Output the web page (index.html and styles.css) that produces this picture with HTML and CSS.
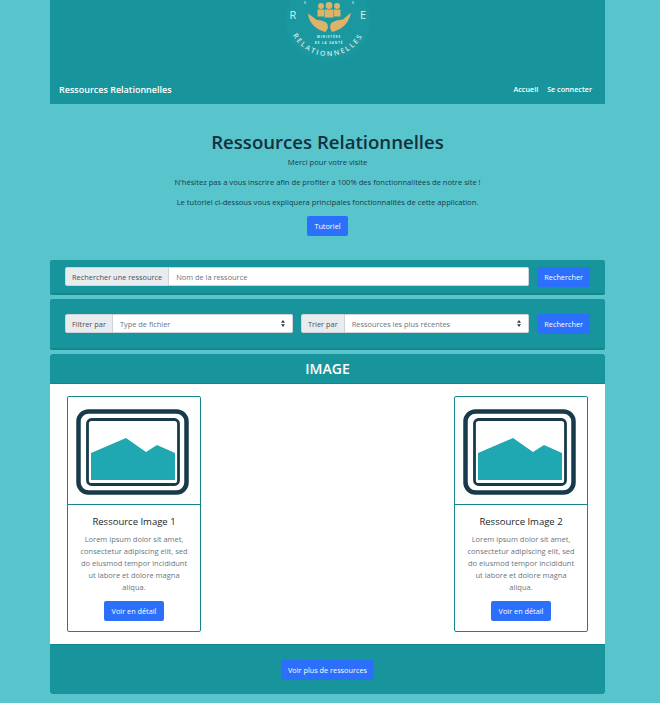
FILE: index.html
```html
<!DOCTYPE html>
<html lang="fr">
<head>
  <meta charset="UTF-8">
  <meta name="viewport" content="width=device-width, initial-scale=1.0">
  <title>Ressources Relationnelles</title>
  <link rel="stylesheet" href="styles.css">
</head>
<body>
  <div class="page">

    <!-- Header -->
    <header class="header">
      <svg class="logo" viewBox="0 0 86 66" width="86" height="66">
        <defs>
          <path id="logoArc" d="M5.500 30 A40 40 0 0 0 80.500 30"/>
        </defs>
        <circle cx="43" cy="20" r="42" fill="#1b989f"/>
        <text class="logo-letter" x="4.500" y="19">R</text>
        <text class="logo-letter" x="75" y="19">E</text>
        <text class="logo-top" x="19" y="3.500">S</text>
        <text class="logo-top" x="67" y="3.500">S</text>
        <g fill="#dcb368">
          <circle cx="36" cy="6" r="3"/>
          <circle cx="44" cy="5.500" r="3.400"/>
          <circle cx="52" cy="6" r="3"/>
          <path d="M32.500 9.500h6.500v7h-6.500zM39.500 9.500h9v8h-9zM49 9.500h6.500v7h-6.500z"/>
          <path d="M23 13.500 L32 20 C36 20 40 21 42.500 24 L43 28 L40.500 32 C32 30 24 24 23 13.500Z"/>
          <path d="M66 12.500 L58 19.500 C53 20 48 21 45.500 24 L45 28 L47 32 C56 30 64 24 66 12.500Z"/>
        </g>
        <text class="logo-small" x="44" y="37.500">MINISTÈRE</text>
        <text class="logo-small" x="44" y="44">DE LA SANTÉ</text>
        <text class="logo-ring"><textPath href="#logoArc" startOffset="50%">RELATIONNELLES</textPath></text>
      </svg>
      <nav class="navbar">
        <a class="brand" href="#">Ressources Relationnelles</a>
        <div class="nav-links">
          <a href="#">Accueil</a>
          <a href="#">Se connecter</a>
        </div>
      </nav>
    </header>

    <!-- Intro -->
    <section class="hero">
      <h1>Ressources Relationnelles</h1>
      <p class="hero-first">Merci pour votre visite</p>
      <p>N'hésitez pas a vous inscrire afin de profiter a 100% des fonctionnalitées de notre site !</p>
      <p class="hero-last">Le tutoriel ci-dessous vous expliquera principales fonctionnalités de cette application.</p>
      <button class="btn">Tutoriel</button>
    </section>

    <!-- Search -->
    <form class="bar bar-search">
      <div class="input-group grow">
        <span class="addon">Rechercher une ressource</span>
        <input class="field" type="text" placeholder="Nom de la ressource">
      </div>
      <button class="btn" type="button">Rechercher</button>
    </form>

    <!-- Filters -->
    <form class="bar bar-filter">
      <div class="input-group filter-type">
        <span class="addon">Filtrer par</span>
        <div class="field select">
          Type de fichier
          <svg class="chevrons" viewBox="0 0 4 7" width="4" height="7"><path d="M2 0 L4 2.700 H0Z M2 7 L4 4.300 H0Z"/></svg>
        </div>
      </div>
      <div class="input-group grow">
        <span class="addon">Trier par</span>
        <div class="field select">
          Ressources les plus récentes
          <svg class="chevrons" viewBox="0 0 4 7" width="4" height="7"><path d="M2 0 L4 2.700 H0Z M2 7 L4 4.300 H0Z"/></svg>
        </div>
      </div>
      <button class="btn" type="button">Rechercher</button>
    </form>

    <!-- Resources -->
    <section class="panel">
      <h2 class="panel-title">IMAGE</h2>
      <div class="panel-body">
        <article class="res-card">
          <div class="res-thumb">
            <svg viewBox="0 0 132 107" width="132" height="107">
              <rect x="10.500" y="14.500" width="108" height="81" rx="10" fill="none" stroke="#173b4a" stroke-width="4.500"/>
              <rect x="19.500" y="22.500" width="91" height="65" rx="4" fill="none" stroke="#173b4a" stroke-width="2.800"/>
              <path d="M23 56 L58 41 L78 55 L89 48 L107 56 V83 H23Z" fill="#1fa8b2"/>
            </svg>
          </div>
          <div class="res-body">
            <h3>Ressource Image 1</h3>
            <p>Lorem ipsum dolor sit amet, consectetur adipiscing elit, sed do eiusmod tempor incididunt ut labore et dolore magna aliqua.</p>
            <button class="btn">Voir en détail</button>
          </div>
        </article>
        <article class="res-card">
          <div class="res-thumb">
            <svg viewBox="0 0 132 107" width="132" height="107">
              <rect x="10.500" y="14.500" width="108" height="81" rx="10" fill="none" stroke="#173b4a" stroke-width="4.500"/>
              <rect x="19.500" y="22.500" width="91" height="65" rx="4" fill="none" stroke="#173b4a" stroke-width="2.800"/>
              <path d="M23 56 L58 41 L78 55 L89 48 L107 56 V83 H23Z" fill="#1fa8b2"/>
            </svg>
          </div>
          <div class="res-body">
            <h3>Ressource Image 2</h3>
            <p>Lorem ipsum dolor sit amet, consectetur adipiscing elit, sed do eiusmod tempor incididunt ut labore et dolore magna aliqua.</p>
            <button class="btn">Voir en détail</button>
          </div>
        </article>
      </div>
      <div class="panel-footer">
        <button class="btn">Voir plus de ressources</button>
      </div>
    </section>

  </div>
</body>
</html>
```

FILE: styles.css
```css
* {
  box-sizing: border-box;
}
body {
  margin: 0;
  background-color: #58c4cc;
  font-family: "Open Sans", "Noto Sans", sans-serif;
  color: #173b4a;
}
.page {
  width: 555px;
  margin-left: 50px;
  padding-bottom: 9px;
}

.header {
  height: 104px;
  background-color: #18959c;
  text-align: center;
}
.logo {
  display: block;
  margin: 0 auto;
}
.logo-letter {
  font-size: 11px;
  fill: #d9f0f0;
}
.logo-top {
  font-size: 3.500px;
  font-weight: 600;
  fill: #d9f0f0;
}
.logo-small {
  font-size: 3px;
  font-weight: 700;
  letter-spacing: 0.9px;
  fill: #d9f0f0;
  text-anchor: middle;
}
.logo-ring {
  font-size: 7px;
  font-weight: 600;
  letter-spacing: 1.900px;
  fill: #cdecec;
  text-anchor: middle;
}
.navbar {
  display: flex;
  justify-content: space-between;
  align-items: center;
  height: 38px;
  padding: 8px 13px 0 9px;
}
.navbar a {
  color: #fff;
  text-decoration: none;
}
.brand {
  font-size: 9px;
  font-weight: 600;
}
.nav-links {
  display: flex;
  gap: 9px;
  font-size: 7.200px;
  font-weight: 600;
}

.hero {
  padding-top: 26px;
  text-align: center;
  font-size: 7.600px;
  height: 156px;
}
.hero h1 {
  margin: 0;
  font-size: 18.600px;
  font-weight: 600;
  line-height: 23px;
  color: #12303d;
}
.hero p {
  margin: 0 0 10px;
  line-height: 10px;
}
.hero .hero-first {
  margin-top: 4px;
}
.hero .hero-last {
  margin-bottom: 9px;
}
.btn {
  display: block;
  padding: 0 7px;
  height: 20px;
  border: none;
  border-radius: 2px;
  background-color: #2b6ffb;
  color: #fff;
  font-family: inherit;
  font-size: 7.300px;
  font-weight: 500;
}
.hero .btn,
.res-body .btn {
  margin: 0 auto;
}
.res-body .btn {
  padding: 0 8px;
}

.bar {
  display: flex;
  align-items: center;
  gap: 8px;
  padding: 0 15px;
  margin-bottom: 4px;
  background-color: #18959c;
  border-bottom: 2px solid #14868d;
  border-radius: 2px;
}
.bar-search {
  height: 35px;
}
.bar-filter {
  height: 51px;
}
.input-group {
  display: flex;
  height: 19px;
  font-size: 7.400px;
}
.grow {
  flex: 1;
}
.filter-type {
  width: 228px;
}
.addon {
  display: flex;
  align-items: center;
  padding: 0 6px;
  background-color: #e9ecef;
  color: #495057;
  border: 1px solid #ced4da;
  border-radius: 2px 0 0 2px;
  white-space: nowrap;
}
.field {
  flex: 1;
  min-width: 0;
  padding: 0 7px;
  border: 1px solid #ced4da;
  border-left: none;
  border-radius: 0 2px 2px 0;
  background-color: #fff;
  color: #6c757d;
  font-family: inherit;
  font-size: 7.400px;
}
.field::placeholder {
  color: #6c757d;
}
.select {
  display: flex;
  align-items: center;
  justify-content: space-between;
}
.chevrons {
  fill: #343a40;
}

.panel {
  border-radius: 2px;
  background-color: #fff;
  overflow: hidden;
}
.panel-title {
  margin: 0;
  height: 30px;
  background-color: #18959c;
  color: #fff;
  font-size: 14px;
  font-weight: 600;
  line-height: 30px;
  text-align: center;
  border-bottom: 1px solid #14868d;
}
.panel-body {
  display: flex;
  justify-content: space-between;
  height: 260px;
  padding: 12px 17px;
}
.res-card {
  width: 134px;
  height: 236px;
  border: 1px solid #18858c;
  border-radius: 2px;
  text-align: center;
}
.res-thumb {
  height: 108px;
  border-bottom: 1px solid #18858c;
}
.res-thumb svg {
  display: block;
}
.res-body {
  padding: 10px 11px 0;
}
.res-body h3 {
  margin: 0 0 5px;
  font-size: 9.500px;
  font-weight: 500;
  line-height: 13px;
  color: #212529;
}
.res-body p {
  margin: 0 0 8px;
  font-size: 7.500px;
  line-height: 12px;
  color: #6c757d;
}
.panel-footer {
  display: flex;
  justify-content: center;
  align-items: center;
  height: 50px;
  background-color: #18959c;
  border-top: 1px solid #14868d;
}
```
